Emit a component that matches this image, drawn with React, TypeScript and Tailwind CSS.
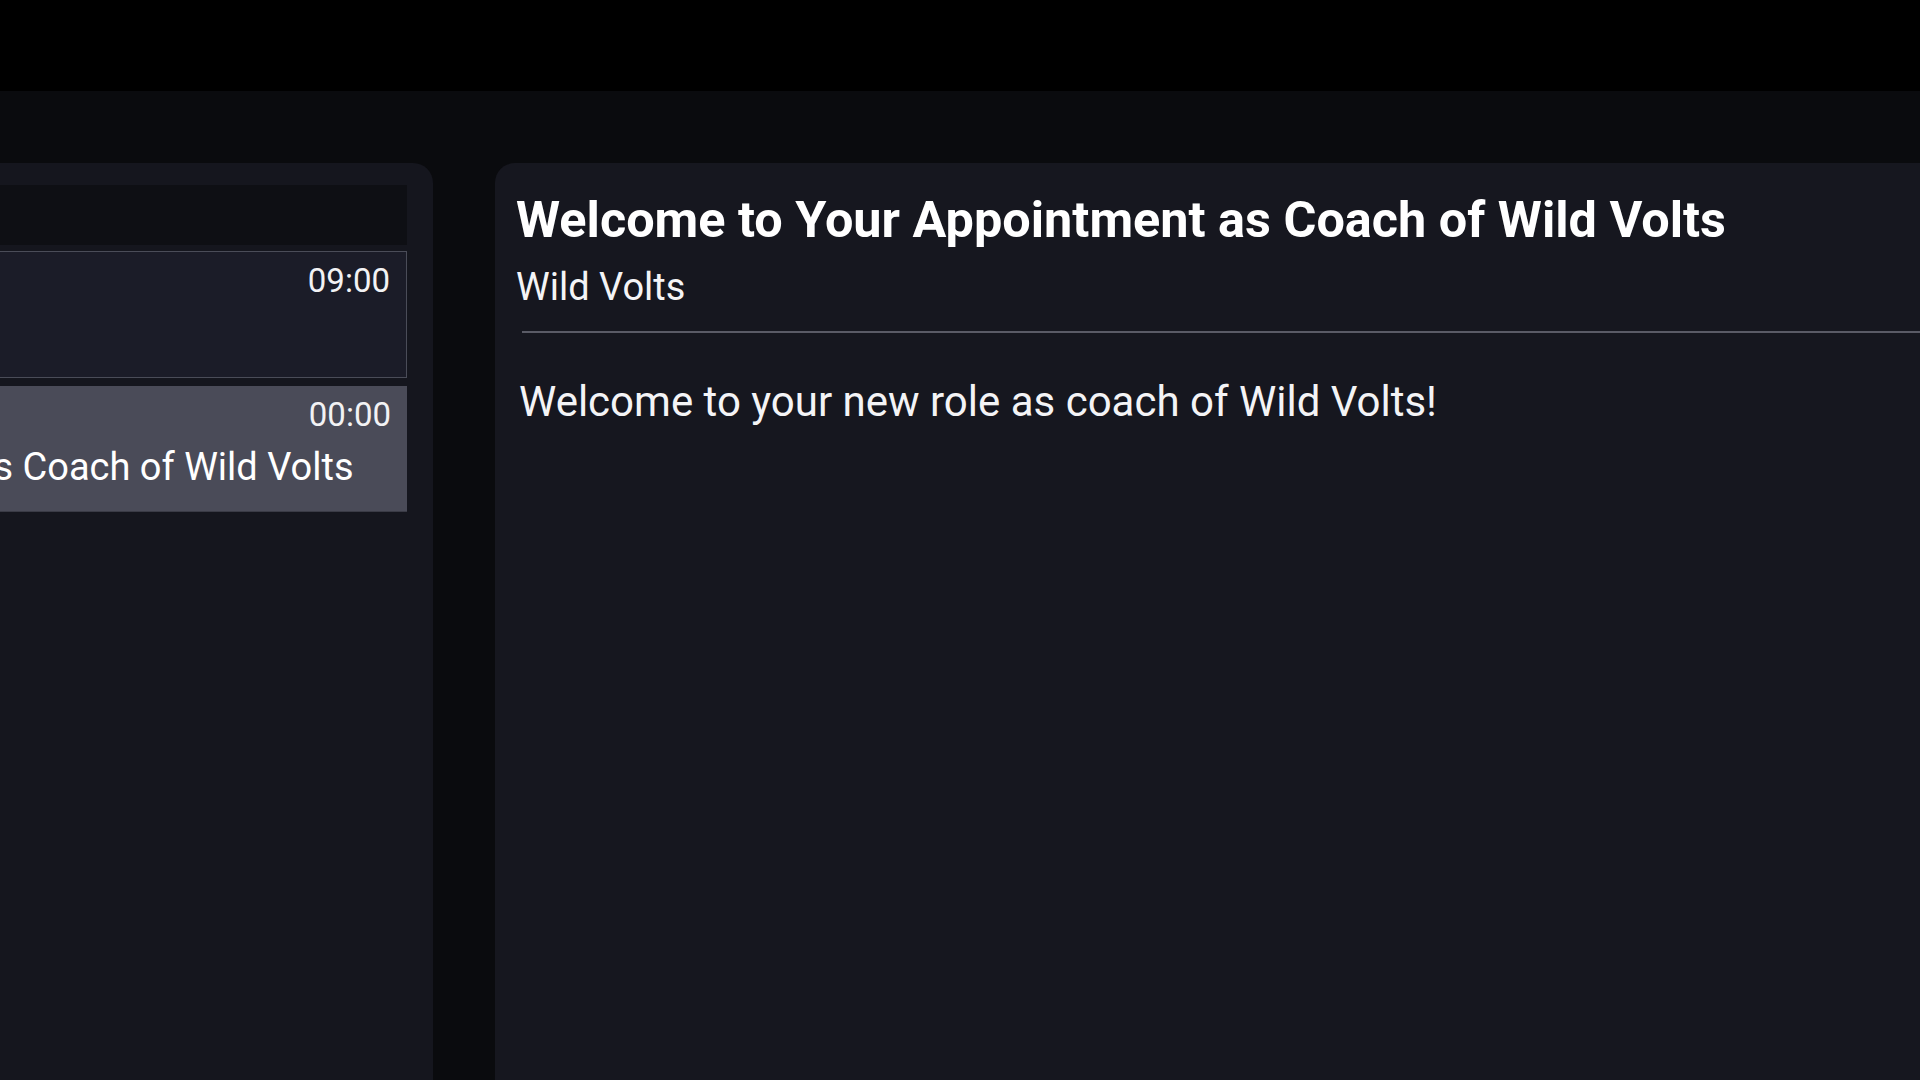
const font = { fontFamily: "Roboto, 'Noto Sans', sans-serif" } as React.CSSProperties;

const items = [
  { time: "09:00", title: "", active: false },
  { time: "00:00", title: "Welcome to Your Appointment as Coach of Wild Volts", active: true },
];

export default function App() {
  return (
    <div className="w-[1920px] h-[1080px] overflow-hidden bg-[#0a0b0e] text-white" style={font}>
      {/* top bar */}
      <div className="h-[91px] bg-black" />

      {/* panels row, scrolled sideways */}
      <div className="flex gap-[62px] ml-[-590px] pt-[72px]">
        {/* inbox list */}
        <div className="w-[1023px] h-[1000px] shrink-0 rounded-t-[20px] bg-[#15161e] pt-[22px] pl-[26px] pr-[26px]">
          <div className="h-[60px] bg-[#0e0f14]" />
          <div className="mt-[6px] flex flex-col gap-[8px]">
            {items.map((it) => (
              <div
                key={it.time}
                className={
                  it.active
                    ? "h-[126px] bg-[#4a4b58] border-b border-[#3a3b46] pl-[12px] pr-[16px] pt-[9px]"
                    : "h-[127px] bg-[#1b1c28] border border-[#4a4c58] pl-[12px] pr-[16px] pt-[9px]"
                }
              >
                <div className="text-right text-[33px] leading-[39px] text-[#f2f2f4]">{it.time}</div>
                <div className="mt-[11px] text-[38px] leading-[44px] whitespace-nowrap">{it.title}</div>
              </div>
            ))}
          </div>
        </div>

        {/* message view */}
        <div className="w-[1500px] h-[1000px] shrink-0 rounded-t-[20px] bg-[#16171f] pt-[28px]">
          <div className="pl-[21px]">
            <h1 className="text-[50.4px] leading-[58px] font-bold">Welcome to Your Appointment as Coach of Wild Volts</h1>
            <div className="mt-[16px] text-[38px] leading-[44px] text-[#f4f4f6]">Wild Volts</div>
          </div>
          <div className="pl-[27px]">
            <div className="mt-[22px] h-[2px] bg-[#5a5b66]" />
            <p className="mt-[44px] -ml-[3px] text-[42px] leading-[49px] text-[#f4f4f6]">Welcome to your new role as coach of Wild Volts!</p>
          </div>
        </div>
      </div>
    </div>
  );
}
